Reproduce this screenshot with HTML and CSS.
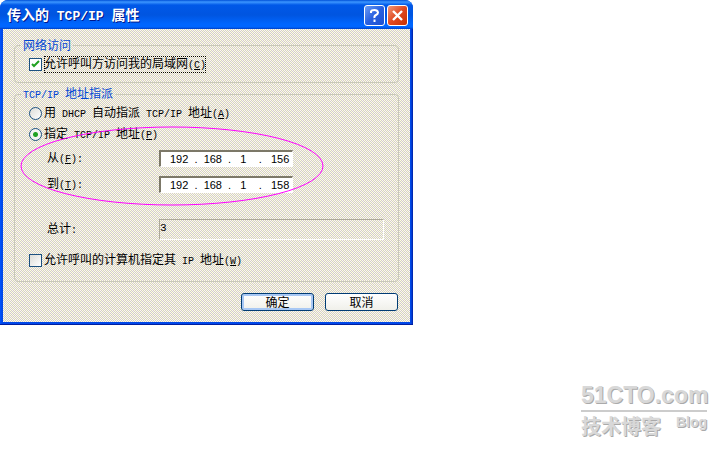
FILE: index.html
```html
<!DOCTYPE html>
<html lang="zh-CN">
<head>
  <meta charset="UTF-8">
  <meta name="viewport" content="width=device-width, initial-scale=1.0">
  <title>传入的 TCP/IP 属性</title>
  <link rel="stylesheet" href="styles.css">
</head>
<body>
  <form class="dialog">
    <header class="title-bar">
      <h1>传入的<span class="en"> TCP/IP </span>属性</h1>
      <button type="button" class="title-btn" aria-label="帮助">
        <svg width="19" height="19" viewBox="0 0 19 19"><path d="M6 7V5.500Q6.500 4 9.500 4T13 6.500Q13 8 11 9T9.500 12M9.500 13.500V16" fill="none" stroke="#fff" stroke-width="2"/></svg>
      </button>
      <button type="button" class="title-btn close" aria-label="关闭">
        <svg width="19" height="19" viewBox="0 0 19 19"><path d="M5 5L14 14M14 5L5 14" fill="none" stroke="#fff" stroke-width="2.400"/></svg>
      </button>
    </header>

    <div class="content">
      <fieldset class="group access">
        <legend>网络访问</legend>
        <label class="option"><input type="checkbox" checked><span class="focused">允许呼叫方访问我的局域网<span class="en">(<u>C</u>)</span></span></label>
      </fieldset>

      <fieldset class="group address">
        <legend><span class="en">TCP/IP </span>地址指派</legend>
        <label class="option"><input type="radio" name="assign"><span>用<span class="en"> DHCP </span>自动指派<span class="en"> TCP/IP </span>地址<span class="en">(<u>A</u>)</span></span></label>
        <label class="option"><input type="radio" name="assign" checked><span>指定<span class="en"> TCP/IP </span>地址<span class="en">(<u>P</u>)</span></span></label>
        <div class="row">
          <label for="from">从<span class="en">(<u>F</u>):</span></label>
          <input class="ip" id="from" type="text" value="192  .  168  .   1    .   156">
        </div>
        <div class="row">
          <label for="to">到<span class="en">(<u>T</u>):</span></label>
          <input class="ip" id="to" type="text" value="192  .  168  .   1    .   158">
        </div>
        <div class="row total-row">
          <label for="total">总计<span class="en">:</span></label>
          <input class="total" id="total" type="text" value="3" readonly>
        </div>
        <label class="option"><input type="checkbox"><span>允许呼叫的计算机指定其<span class="en"> IP </span>地址<span class="en">(<u>W</u>)</span></span></label>
        <svg class="marker" viewBox="0 0 304 80" aria-hidden="true"><ellipse cx="152" cy="40" rx="151" ry="39"/></svg>
      </fieldset>

      <div class="actions">
        <button type="submit" class="btn default">确定</button>
        <button type="button" class="btn">取消</button>
      </div>
    </div>
  </form>

  <footer class="watermark">
    <div class="site">51CTO.com</div>
    <div class="sub"><span class="name">技术博客</span><span class="blog">Blog</span></div>
  </footer>
</body>
</html>
```

FILE: styles.css
```css
:root {
  --navy: #003c74;
  --dither:
    repeating-conic-gradient(#d2cfcc 0% 25%, transparent 0% 50%) 0 0 / 2px 2px,
    repeating-conic-gradient(#ffffdc 0% 25%, #fff8f0 0% 50%) 0 0 / 4px 4px;
}

* {
  box-sizing: border-box;
}

body {
  margin: 0;
  min-height: 100vh;
  background: #fff;
  color: #000;
  font: 12px/14px "Noto Sans CJK SC", sans-serif;
  display: flex;
  flex-direction: column;
  align-items: flex-start;
  justify-content: space-between;
}

button,
input {
  font: inherit;
  margin: 0;
}

.en {
  font-family: "Liberation Mono", monospace;
  font-size: 10px;
  white-space: pre;
}

.dialog {
  width: 413px;
  max-width: 100%;
  padding: 0 3px 2px;
  background: linear-gradient(to right, #0054ff, #0048e8 2px, #0048e8 calc(100% - 2px), #001ea0);
  border-bottom: 1px solid #001ea0;
  border-radius: 8px 8px 0 0;
  overflow: hidden;
}

.title-bar {
  display: flex;
  align-items: center;
  gap: 2px;
  height: 29px;
  margin: 0 -3px;
  padding: 2px 5px 0 7px;
  background: linear-gradient(#0050d8, #3c96ff 2px, #0058e8 5px, #0055e0 15px, #0066ff 24px, #0066ff 27px, #0040c8);
}

.title-bar h1 {
  flex: 1;
  margin: 0;
  color: #fff;
  font-size: 14px;
  line-height: 16px;
  text-shadow: 1px 1px #00188c;
}

.title-bar .en {
  font-size: 13px;
}

.title-btn {
  display: grid;
  place-items: center;
  width: 21px;
  height: 21px;
  padding: 0;
  border: 1px solid #fff;
  border-radius: 3px;
  background: linear-gradient(135deg, #6c9cf4, #2860e0 50%, #1c50d0);
}

.title-btn.close {
  background: linear-gradient(135deg, #f09878, #e04820 50%, #c83000);
}

.content {
  padding: 9px 11px 11px;
  background: var(--dither);
}

.group {
  position: relative;
  min-width: 0;
  margin: 0;
  border: 1px solid #c8c8b8;
  border-radius: 4px;
}

.group legend {
  margin-left: -8px;
  padding: 0 2px;
  color: #0046d5;
}

.access {
  height: 45px;
  padding: 5px 14px 0;
}

.address {
  margin-top: 3px;
  padding: 3px 14px 13px;
}

.option {
  display: flex;
  align-items: center;
  gap: 2px;
  height: 15px;
}

.option + .option {
  margin-top: 6px;
}

.option input {
  appearance: none;
  width: 13px;
  height: 13px;
  border: 1px solid #1c5180;
  background: linear-gradient(135deg, #dcdcd7, #fff);
}

.option input[type="radio"] {
  border-radius: 50%;
}

.option input[type="radio"]:checked {
  background: radial-gradient(circle, #21a121 0 2px, #f4f4f0 3px);
}

.option input[type="checkbox"]:checked {
  background: url("data:image/svg+xml,%3Csvg xmlns='http://www.w3.org/2000/svg' viewBox='0 0 11 11'%3E%3Cpath d='M2 5l2 2 5-5' fill='none' stroke='%2321a121' stroke-width='2'/%3E%3C/svg%3E") #fff;
}

.focused {
  outline: 1px dotted #000;
  outline-offset: -1px;
}

.row {
  display: flex;
  align-items: center;
  height: 18px;
  margin-top: 8px;
  padding-left: 18px;
}

.option + .row {
  margin-top: 7px;
}

.row label {
  width: 112px;
}

.ip,
.total {
  border: 1px solid #fff;
  border-top: 2px solid #7c7868;
  border-left: 2px solid #7c7868;
  padding: 0 0 0 9px;
}

.ip {
  width: 134px;
  height: 17px;
  background: #fff;
  font-family: "Liberation Sans", sans-serif;
  font-size: 11px;
  white-space: pre;
}

.total-row {
  height: 21px;
  margin: 26px 0 13px;
}

.total {
  flex: 1;
  min-width: 0;
  height: 21px;
  padding: 0 0 4px;
  border-width: 1px;
  border-top-color: #aca899;
  border-left-color: #aca899;
  background: transparent;
  font-family: "Liberation Mono", monospace;
  font-size: 11px;
}

.marker {
  position: absolute;
  left: 5px;
  top: 23px;
  width: 304px;
  height: 80px;
  fill: none;
  stroke: #f0f;
  pointer-events: none;
}

.actions {
  display: flex;
  justify-content: flex-end;
  gap: 11px;
  margin-top: 11px;
  padding-right: 1px;
}

.btn {
  width: 73px;
  height: 18px;
  padding: 0;
  border: 1px solid var(--navy);
  border-radius: 3px;
  background: linear-gradient(#fff, #f0f0ea);
  color: #000;
  line-height: 14px;
}

.btn.default {
  box-shadow: inset 0 0 0 2px #a8c8f4;
}

.watermark {
  align-self: flex-end;
  width: 126px;
  margin: 0 13px 10px 0;
  color: #d8d8d8;
  text-shadow: 1px 1px #aaa;
}

.site {
  border-bottom: 2px solid #ccc;
  font: bold 23px/30px "Liberation Sans", sans-serif;
}

.sub {
  display: flex;
  justify-content: space-between;
}

.name {
  font-size: 20px;
  font-weight: bold;
  line-height: 28px;
}

.blog {
  font: bold 14px/20px "Liberation Sans", sans-serif;
}
```
